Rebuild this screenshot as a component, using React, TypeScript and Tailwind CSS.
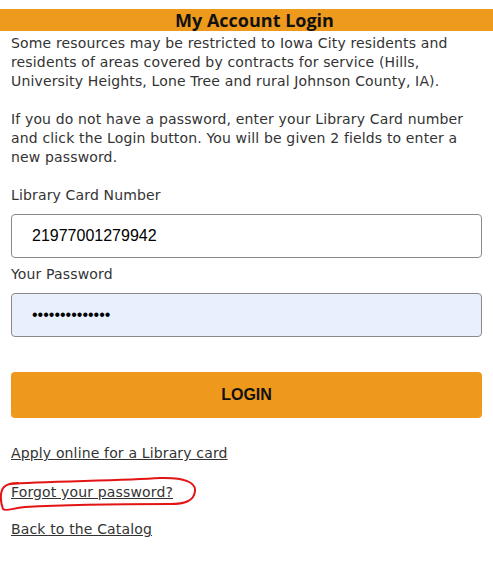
const body = "font-['DejaVu_Sans','Noto_Sans',sans-serif] text-[14px] leading-[19px] tracking-[0.15px] text-[#333]";

const Field = ({ label, value, type, filled }: { label: string; value: string; type: string; filled?: boolean }) => (
  <div className="flex flex-col">
    <label className={`${body} h-[19px]`}>{label}</label>
    <input
      type={type}
      defaultValue={value}
      className={`mt-[9px] h-[44px] w-full rounded-[4px] border border-[#8a8a8a] px-5 font-['Liberation_Sans',Arial,sans-serif] text-[16px] text-black outline-none ${
        filled ? "bg-[#e8f0fe]" : "bg-white"
      }`}
    />
  </div>
);

export default function App() {
  return (
    <div className="min-h-[570px] w-full bg-white pt-[9px]">
      <h1 className="h-[22px] bg-[#ee9a1d] pl-4 text-center font-['Open_Sans','Noto_Sans',sans-serif] text-[18px] font-bold leading-[22px] text-[#111]">
        My Account Login
      </h1>
      <div className="px-[11px] pt-[3px]">
        <p className={body}>
          Some resources may be restricted to Iowa City residents and residents of areas covered by contracts for
          service (Hills, University Heights, Lone Tree and rural Johnson County, IA).
        </p>
        <p className={`${body} mt-[19px]`}>
          If you do not have a password, enter your Library Card number and click the Login button. You will be given
          2 fields to enter a new password.
        </p>
        <div className="mt-[19px] flex flex-col gap-[7px]">
          <Field label="Library Card Number" value="21977001279942" type="text" />
          <Field label="Your Password" value="••••••••••••••" type="password" filled />
        </div>
        <button className="mt-[35px] h-[46px] w-full rounded-[4px] bg-[#ee981c] font-['Liberation_Sans',Arial,sans-serif] text-[16px] font-bold text-[#111]">
          LOGIN
        </button>
        <div className="mt-[26px] flex flex-col">
          <a href="#" className={`${body} block w-fit underline`}>
            Apply online for a Library card
          </a>
          <div className="relative mt-[20px]">
            <a href="#" className={`${body} block w-fit underline`}>
              Forgot your password?
            </a>
            <svg
              className="pointer-events-none absolute left-[-11px] top-[-10px]"
              width="200"
              height="42"
              viewBox="0 0 200 42"
              fill="none"
            >
              <path
                d="M10 11 C40 8 120 8 160 5 C185 4 196 10 195 18 C194 28 185 31 170 31 C120 31 60 32 25 34 C12 35 6 39 3 36 C0 28 0 18 4 14 C7 11 12 10 18 10"
                stroke="#e31414"
                strokeWidth="2"
                strokeLinecap="round"
                strokeLinejoin="round"
              />
            </svg>
          </div>
          <a href="#" className={`${body} mt-[18px] block w-fit underline`}>
            Back to the Catalog
          </a>
        </div>
      </div>
    </div>
  );
}
